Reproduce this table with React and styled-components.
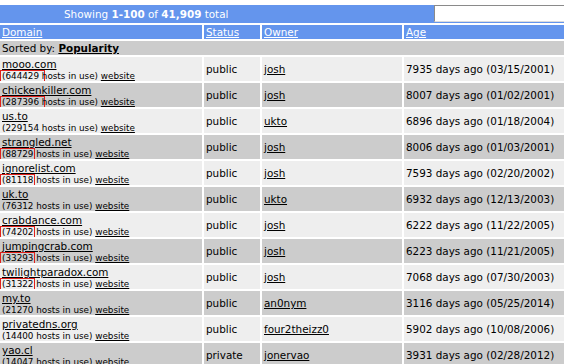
import React from "react";
import styled, { createGlobalStyle } from "styled-components";

const GlobalStyle = createGlobalStyle`
  html, body {
    margin: 0;
    padding: 0;
    background: #ffffff;
    overflow: hidden;
  }
  body {
    font-family: "DejaVu Sans", Verdana, sans-serif;
    font-size: 10.4px;
    color: #000;
  }
`;

const rows = [
  { domain: "mooo.com", hosts: "644429", status: "public", owner: "josh", days: 7935, date: "03/15/2001", mark: true, wide: true },
  { domain: "chickenkiller.com", hosts: "287396", status: "public", owner: "josh", days: 8007, date: "01/02/2001", mark: true, wide: true },
  { domain: "us.to", hosts: "229154", status: "public", owner: "ukto", days: 6896, date: "01/18/2004" },
  { domain: "strangled.net", hosts: "88729", status: "public", owner: "josh", days: 8006, date: "01/03/2001", mark: true },
  { domain: "ignorelist.com", hosts: "81118", status: "public", owner: "josh", days: 7593, date: "02/20/2002", mark: true },
  { domain: "uk.to", hosts: "76312", status: "public", owner: "ukto", days: 6932, date: "12/13/2003" },
  { domain: "crabdance.com", hosts: "74202", status: "public", owner: "josh", days: 6222, date: "11/22/2005", mark: true },
  { domain: "jumpingcrab.com", hosts: "33293", status: "public", owner: "josh", days: 6223, date: "11/21/2005", mark: true },
  { domain: "twilightparadox.com", hosts: "31322", status: "public", owner: "josh", days: 7068, date: "07/30/2003", mark: true },
  { domain: "my.to", hosts: "21270", status: "public", owner: "an0nym", days: 3116, date: "05/25/2014" },
  { domain: "privatedns.org", hosts: "14400", status: "public", owner: "four2theizz0", days: 5902, date: "10/08/2006" },
  { domain: "yao.cl", hosts: "14047", status: "private", owner: "jonervao", days: 3931, date: "02/28/2012" },
];

// Domain list
const App = () => {
  return (
    <>
      <GlobalStyle />
      <Table>
        <colgroup>
          <col style={{ width: 202 }} />
          <col style={{ width: 56 }} />
          <col style={{ width: 140 }} />
          <col style={{ width: 200 }} />
        </colgroup>
        <tbody>
          <tr>
            <TopCell colSpan={4}>
              <TopBar>
                <Title>
                  Showing <b>1-100</b> of <b>41,909</b> total
                </Title>
                <Search type="text" />
              </TopBar>
            </TopCell>
          </tr>
          <tr>
            <HeadCell><HeadLink href="#">Domain</HeadLink></HeadCell>
            <HeadCell><HeadLink href="#">Status</HeadLink></HeadCell>
            <HeadCell><HeadLink href="#">Owner</HeadLink></HeadCell>
            <HeadCell><HeadLink href="#">Age</HeadLink></HeadCell>
          </tr>
          <tr>
            <SortCell colSpan={4}>
              Sorted by: <SortLink href="#">Popularity</SortLink>
            </SortCell>
          </tr>
          {rows.map((r, i) => (
            <Row key={r.domain} $dark={i % 2 === 1}>
              <Cell>
                <DomainLine>
                  <Link href="#">{r.domain}</Link>
                </DomainLine>
                <HostsLine>
                  {r.mark ? <Mark $wide={r.wide}>({r.hosts}</Mark> : `(${r.hosts}`} hosts in use){" "}
                  <Link href="#">website</Link>
                </HostsLine>
              </Cell>
              <Cell>{r.status}</Cell>
              <Cell>
                <Link href="#">{r.owner}</Link>
              </Cell>
              <Cell>
                {r.days} days ago ({r.date})
              </Cell>
            </Row>
          ))}
        </tbody>
      </Table>
    </>
  );
};

const Table = styled.table`
  table-layout: fixed;
  border-collapse: separate;
  border-spacing: 2px;
  width: 608px;
  margin: 3px 0 0 -2px;
  font-size: 10.4px;
`;

const TopCell = styled.td`
  background: #6495ed;
  height: 18px;
  padding: 0;
`;

const TopBar = styled.div`
  display: flex;
  align-items: flex-start;
  height: 18px;
`;

const Title = styled.div`
  color: #fff;
  padding-left: 64px;
  line-height: 18px;
  white-space: nowrap;
`;

const Search = styled.input`
  margin: 0 0 0 auto;
  box-sizing: border-box;
  width: 170px;
  height: 17px;
  border: 1px solid #8a8a8a;
  border-right-color: #dcdcdc;
  border-bottom-color: #dcdcdc;
  background: #fff;
  padding: 0;
`;

const HeadCell = styled.td`
  background: #6495ed;
  height: 14px;
  padding: 0 2px;
  line-height: 14px;
`;

const HeadLink = styled.a`
  color: #fff;
  text-decoration: underline;
`;

const SortCell = styled.td`
  background: #cccccc;
  height: 14px;
  padding: 0 2px;
  line-height: 14px;
`;

const SortLink = styled.a`
  color: #000;
  font-weight: bold;
  text-decoration: underline;
`;

const Row = styled.tr`
  background: ${(p) => (p.$dark ? "#cccccc" : "#eeeeee")};
`;

const Cell = styled.td`
  height: 24px;
  padding: 0 2px;
  vertical-align: middle;
  white-space: nowrap;
  overflow: hidden;
`;

const DomainLine = styled.div`
  padding-top: 1px;
  line-height: 13px;
`;

const HostsLine = styled.div`
  font-size: 8.8px;
  line-height: 10px;
`;

const Link = styled.a`
  color: #000;
  text-decoration: underline;
`;

const Mark = styled.span`
  display: inline-block;
  height: 10px;
  line-height: 10px;
  box-shadow: 0 0 0 1px #e0201c;
  padding: 0 ${(p) => (p.$wide ? 5 : 1)}px 0 1px;
  margin: 0 ${(p) => (p.$wide ? -5 : -1)}px 0 -1px;
`;

export default App;
